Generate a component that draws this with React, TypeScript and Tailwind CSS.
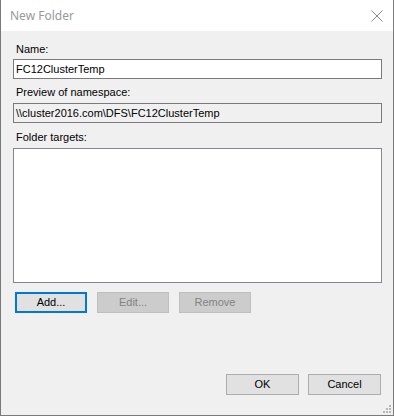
import React from "react";

const font = { fontFamily: '"Liberation Sans", Arial, sans-serif' };

function SizeGrip() {
  const dots = [
    [7, 1],
    [4, 4],
    [7, 4],
    [1, 7],
    [4, 7],
    [7, 7],
  ];
  return (
    <svg className="absolute right-[1px] bottom-[1px]" width="10" height="10" viewBox="0 0 10 10">
      {dots.map(([x, y], i) => (
        <rect key={i} x={x} y={y} width="2" height="2" fill="#b8b8b8" />
      ))}
    </svg>
  );
}

function Button({
  label,
  variant = "normal",
  width = "w-[73px]",
}: {
  label: string;
  variant?: "normal" | "default" | "disabled";
  width?: string;
}) {
  const cls =
    variant === "default"
      ? "border-2 border-[#0078d7] bg-[#e1e1e1] text-black"
      : variant === "disabled"
      ? "border border-[#bfbfbf] bg-[#cccccc] text-[#838383]"
      : "border border-[#adadad] bg-[#e1e1e1] text-black";
  return (
    <div className={`${width} h-[21px] flex items-center justify-center text-[11px] ${cls}`}>
      {label}
    </div>
  );
}

export default function App() {
  return (
    <div
      className="relative w-[394px] h-[416px] bg-[#f0f0f0] border-l border-r border-b border-[#7a7a7a] flex flex-col"
      style={font}
    >
      {/* Title bar */}
      <div className="h-[31px] bg-white flex items-center justify-between pl-[9px] pr-[9px] shrink-0">
        <span
          className="text-[12px] text-[#999999] leading-none mt-[1px]"
          style={{ fontFamily: '"Noto Sans", "Open Sans", sans-serif' }}
        >
          New Folder
        </span>
        <svg width="12" height="12" viewBox="0 0 12 12" className="mr-[1px]">
          <path d="M0.5 0.5 L11.5 11.5 M11.5 0.5 L0.5 11.5" stroke="#8a8a8a" strokeWidth="1" fill="none" />
        </svg>
      </div>

      {/* Content */}
      <div className="flex flex-col pl-[12px] pr-[11px] pt-[12px] text-[11px] text-black">
        <div className="leading-[13px] pl-[3px]">Name:</div>
        <div className="mt-[3px] h-[20px] bg-white border border-[#7a7a7a] flex items-center pl-[2px] leading-none">
          FC12ClusterTemp
        </div>

        <div className="mt-[7px] leading-[13px] pl-[3px]">Preview of namespace:</div>
        <div className="mt-[4px] h-[20px] bg-[#f0f0f0] border border-[#7a7a7a] flex items-center pl-[2px] leading-none">
          \\cluster2016.com\DFS\FC12ClusterTemp
        </div>

        <div className="mt-[8px] leading-[13px] pl-[3px]">Folder targets:</div>
        <div className="mt-[4px] h-[135px] bg-white border border-[#828790]" />

        <div className="mt-[9px] flex gap-[10px] pl-[2px]">
          <Button label="Add..." variant="default" width="w-[72px]" />
          <Button label="Edit..." variant="disabled" width="w-[72px]" />
          <Button label="Remove" variant="disabled" width="w-[72px]" />
        </div>

        <div className="mt-[61px] flex justify-end gap-[9px] mr-[1px]">
          <Button label="OK" />
          <Button label="Cancel" />
        </div>
      </div>

      <SizeGrip />
    </div>
  );
}
